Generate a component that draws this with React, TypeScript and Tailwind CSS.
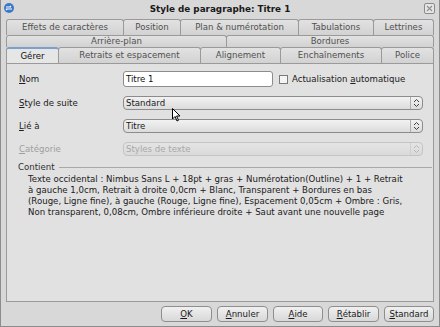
import React from "react";

const font = { fontFamily: '"DejaVu Sans", sans-serif' };

function Tab({ w, label, selected = false, h = "h-[16px]" }: { w: string; label: string; selected?: boolean; h?: string }) {
  return (
    <div
      className={`${w} ${h} shrink-0 flex items-center justify-center border border-b-0 border-[#9a9a9a] rounded-t-[3px] -ml-px first:ml-0 ${
        selected
          ? "bg-[#e6e6e6] text-[#101010] border-t-2 border-t-[#7d9fcf]"
          : "bg-gradient-to-b from-[#e2e2e2] to-[#d2d2d2] text-[#505050]"
      }`}
    >
      {label}
    </div>
  );
}

function UpDown({ disabled = false }: { disabled?: boolean }) {
  const c = disabled ? "#b8b8b8" : "#404040";
  return (
    <div className={`h-full w-[12px] flex items-center justify-center border-l ${disabled ? "border-[#cfcfcf]" : "border-[#b0b0b0]"}`}>
      <svg width="7" height="10" viewBox="0 0 7 10">
        <path d="M1 4 L3.5 1.5 L6 4" stroke={c} strokeWidth="1" fill="none" />
        <path d="M1 6 L3.5 8.5 L6 6" stroke={c} strokeWidth="1" fill="none" />
      </svg>
    </div>
  );
}

function Select({ value, disabled = false }: { value: string; disabled?: boolean }) {
  return (
    <div
      className={`w-[300px] h-[14px] flex items-center rounded-[4px] border ${
        disabled
          ? "border-[#c4c4c4] text-[#a8a8a8] bg-gradient-to-b from-[#e4e4e4] to-[#dadada]"
          : "border-[#8c8c8c] text-[#1a1a1a] bg-gradient-to-b from-[#f2f2f2] to-[#dcdcdc]"
      }`}
    >
      <div className="flex-1 pl-[2px] leading-none">{value}</div>
      <UpDown disabled={disabled} />
    </div>
  );
}

function Btn({ children, w }: { children: React.ReactNode; w: string }) {
  return (
    <div className={`${w} h-[16px] flex items-center justify-center rounded-[4px] border border-[#8e8e8e] bg-gradient-to-b from-[#f0f0f0] to-[#d8d8d8] text-[#1a1a1a]`}>
      {children}
    </div>
  );
}

export default function App() {
  return (
    <div style={font} className="w-[440px] h-[327px] bg-[#d8d8d8] text-[8.6px] text-[#202020] flex flex-col border-l border-b border-[#8c8c8c] border-r relative overflow-hidden">
      {/* title bar */}
      <div className="h-[19px] shrink-0 relative flex items-center justify-center">
        <div className="absolute left-[3px] top-[3px] w-[10px] h-[10px] rounded-full bg-[#3c78c8] flex items-center justify-center">
          <svg width="8" height="8" viewBox="0 0 8 8">
            <path d="M1 3 H6 M5 2 L6 3 M1 5 H7 M2 6 L1 5" stroke="#fff" strokeWidth="1.1" fill="none" />
          </svg>
        </div>
        <div className="font-bold text-[#1a1a1a] text-[8.8px] mt-[1px]">Style de paragraphe: Titre 1</div>
        <div className="absolute right-[4px] top-[3px] w-[11px] h-[11px] border border-[#8a8a8a] rounded-[2px] bg-[#e6e6e6] flex items-center justify-center">
          <svg width="7" height="7" viewBox="0 0 7 7">
            <path d="M1 1 L6 6 M6 1 L1 6" stroke="#909090" strokeWidth="1.2" />
          </svg>
        </div>
      </div>

      {/* tabs */}
      <div className="pl-[5px] flex flex-col">
        <div className="flex">
          <Tab w="w-[118px]" label="Effets de caractères" />
          <Tab w="w-[58px]" label="Position" />
          <Tab w="w-[119px]" label="Plan & numérotation" />
          <Tab w="w-[76px]" label="Tabulations" />
          <Tab w="w-[61px]" label="Lettrines" />
        </div>
        <div className="flex">
          <Tab w="w-[221px]" h="h-[12px]" label="Arrière-plan" />
          <Tab w="w-[208px]" h="h-[12px]" label="Bordures" />
        </div>
        <div className="flex">
          <Tab w="w-[53px]" label="Gérer" selected />
          <Tab w="w-[143px]" label="Retraits et espacement" />
          <Tab w="w-[81px]" label="Alignement" />
          <Tab w="w-[102px]" label="Enchaînements" />
          <Tab w="w-[53px]" label="Police" />
        </div>
      </div>

      {/* panel */}
      <div className="ml-[5px] mr-[5px] h-[239px] shrink-0 border border-[#9a9a9a] bg-[#e1e1e1] flex flex-col pt-[7px] relative">
        <div className="flex items-center h-[16px]">
          <div className="w-[116px] pl-[12px]"><span className="underline">N</span>om</div>
          <div className="w-[150px] h-[16px] border border-[#8c8c8c] rounded-[3px] bg-white flex items-center pl-[2px] text-[#101010]">Titre 1</div>
          <div className="ml-[6px] w-[9px] h-[9px] border border-[#7a7a7a] bg-[#f4f4f4]" />
          <div className="ml-[4px]">Actualisation <span className="underline">a</span>utomatique</div>
        </div>
        <div className="flex items-center mt-[9px]">
          <div className="w-[116px] pl-[12px]"><span className="underline">S</span>tyle de suite</div>
          <Select value="Standard" />
        </div>
        <div className="flex items-center mt-[9px]">
          <div className="w-[116px] pl-[12px]"><span className="underline">L</span>ié à</div>
          <Select value="Titre" />
        </div>
        <div className="flex items-center mt-[9px]">
          <div className="w-[116px] pl-[12px] text-[#9e9e9e]"><span className="underline">C</span>atégorie</div>
          <Select value="Styles de texte" disabled />
        </div>
        <div className="flex items-center mt-[5px] pl-[11px] pr-[1px]">
          <div className="text-[#303030]">Contient</div>
          <div className="flex-1 ml-[4px] h-px bg-[#a8a8a8]" />
        </div>
        <div className="pl-[21px] mt-0 leading-[11px] text-[#202020] whitespace-nowrap">
          Texte occidental : Nimbus Sans L + 18pt + gras + Numérotation(Outline) + 1 + Retrait
          <br />
          à gauche 1,0cm, Retrait à droite 0,0cm + Blanc, Transparent + Bordures en bas
          <br />
          (Rouge, Ligne fine), à gauche (Rouge, Ligne fine), Espacement 0,05cm + Ombre : Gris,
          <br />
          Non transparent, 0,08cm, Ombre inférieure droite + Saut avant une nouvelle page
        </div>
      </div>

      {/* buttons */}
      <div className="flex justify-end gap-[5px] pr-[5px] mt-[4px]">
        <Btn w="w-[51px]"><span className="underline">O</span>K</Btn>
        <Btn w="w-[51px]"><span className="underline">A</span>nnuler</Btn>
        <Btn w="w-[50px]"><span className="underline">A</span>ide</Btn>
        <Btn w="w-[51px]"><span className="underline">R</span>établir</Btn>
        <Btn w="w-[50px]"><span className="underline">S</span>tandard</Btn>
      </div>

      {/* mouse cursor */}
      <svg className="absolute left-[171px] top-[108px]" width="10" height="15" viewBox="0 0 10 15">
        <path d="M0.5 0.5 L0.5 11 L3 8.5 L5 13 L6.5 12.3 L4.6 8 L8 8 Z" fill="#fff" stroke="#000" strokeWidth="1" />
      </svg>
    </div>
  );
}
